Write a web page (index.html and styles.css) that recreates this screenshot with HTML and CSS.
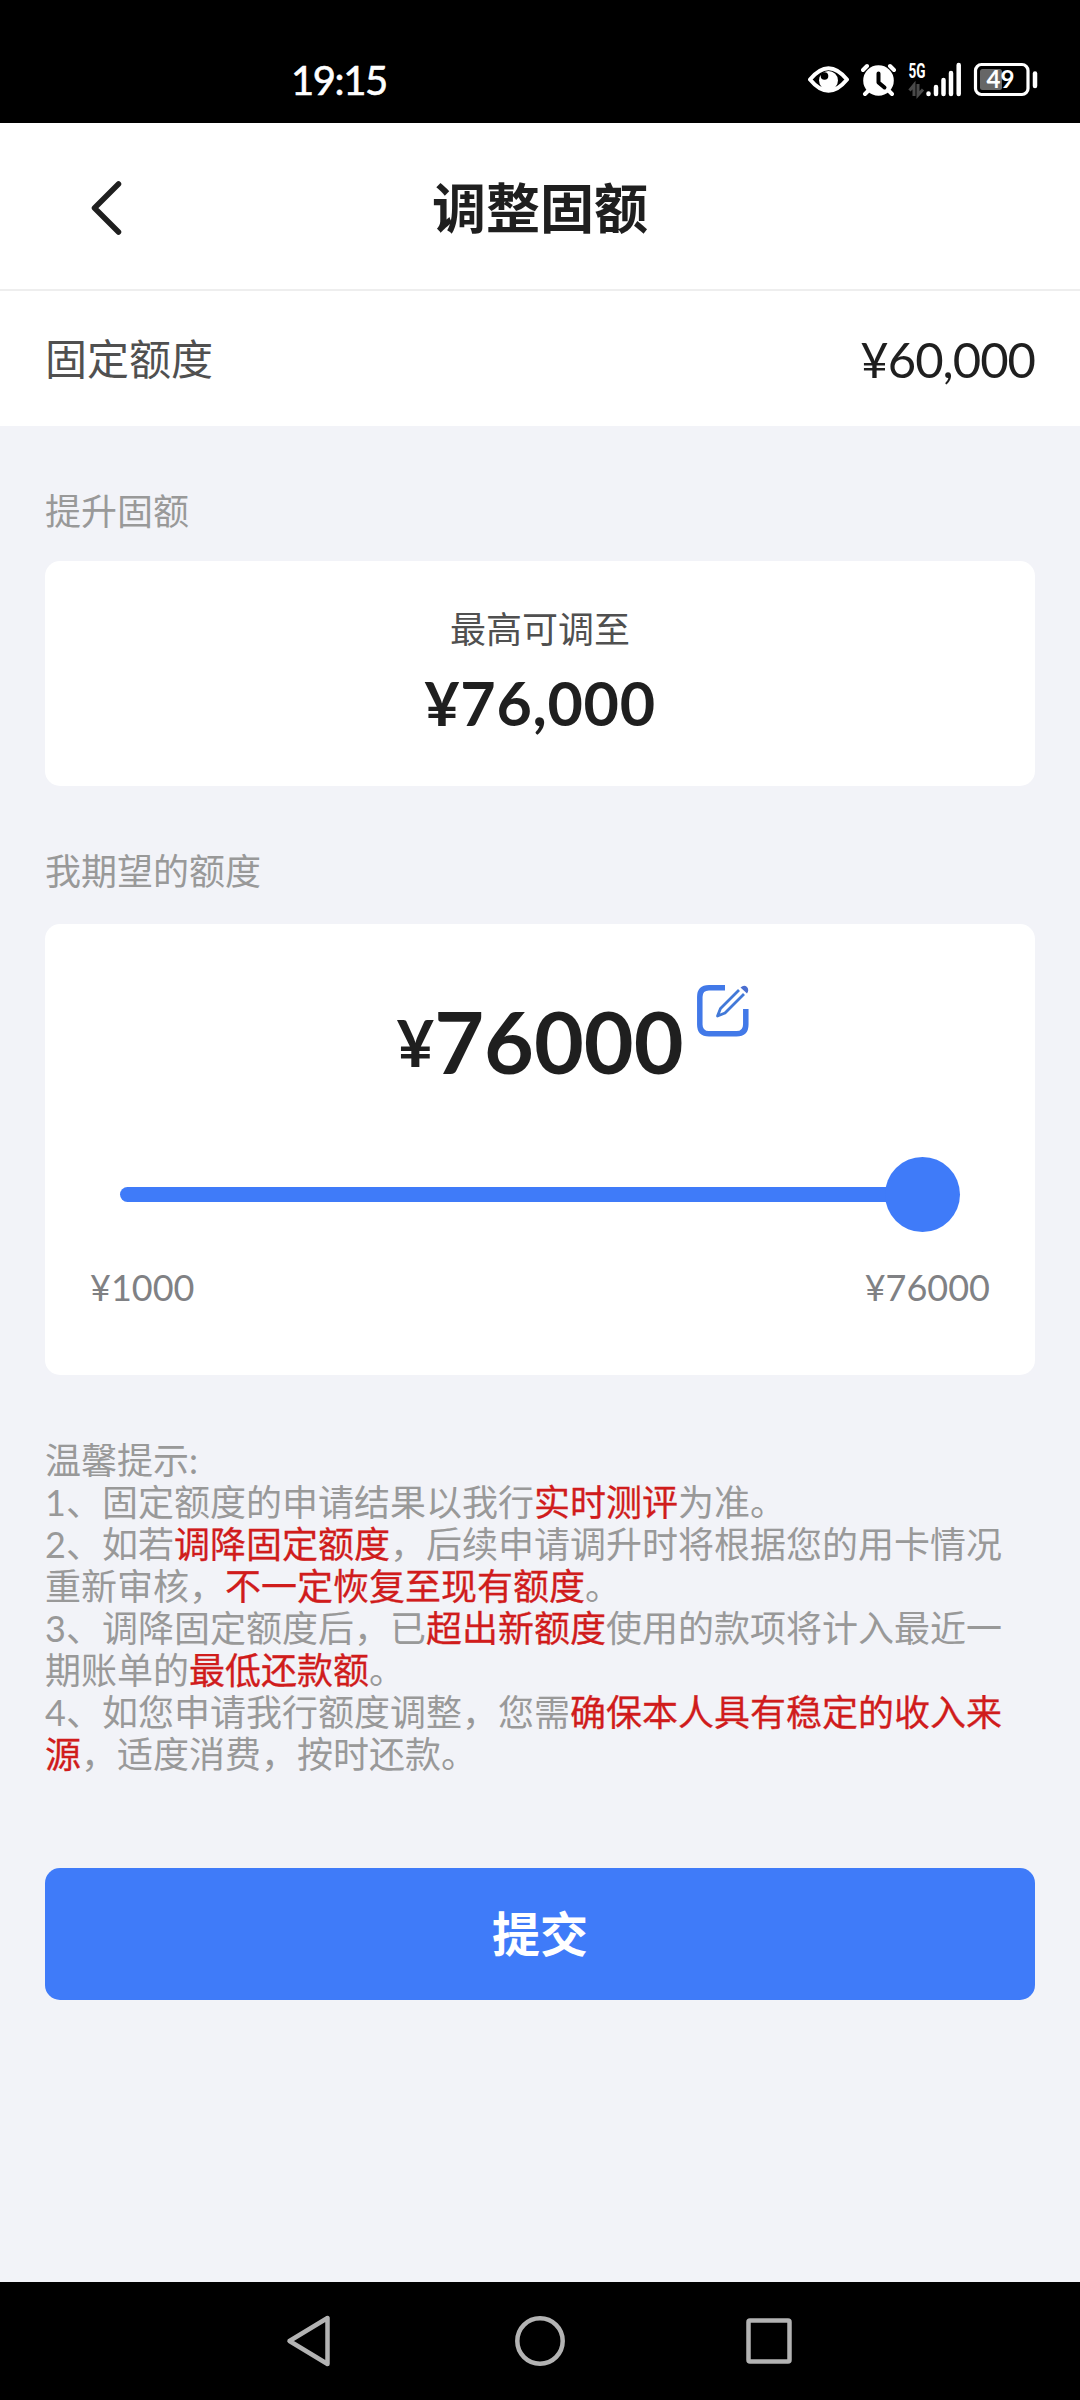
FILE: index.html
```html
<!DOCTYPE html>
<html lang="zh-CN">
<head>
<meta charset="utf-8">
<title>调整固额</title>
<link rel="stylesheet" href="styles.css">
</head>
<body>
<div class="statusbar">
  <span class="clock">19:15</span>
  <div class="status-icons">
    <svg width="42" height="36" viewBox="808 62 42 36">
      <path d="M810 79.5Q828.500 57 847 79.500Q828.500 102 810 79.500Z" fill="none" stroke="#fff" stroke-width="4" stroke-linejoin="round"/>
      <circle cx="828.500" cy="80.500" r="9.500" fill="#fff"/>
      <circle cx="824.500" cy="76" r="3.800" fill="#000"/>
    </svg>
    <svg width="36" height="36" viewBox="861 62 36 36">
      <path d="M863 70l4-4M894 70l-4-4M865 94l5-5M892 94l-5-5" stroke="#fff" stroke-width="4" stroke-linecap="round"/>
      <circle cx="878.500" cy="80.500" r="15.300" fill="#fff"/>
      <path d="M878.500 73.500v9l6 5" fill="none" stroke="#000" stroke-width="4" stroke-linecap="round" stroke-linejoin="round"/>
    </svg>
    <svg class="signal" width="54" height="36" viewBox="908 62 54 36">
      <text class="net" x="908.500" y="77.500" textLength="17" lengthAdjust="spacingAndGlyphs">5G</text>
      <path d="M909.500 90.500L914 85V96M918 84V95L923 89.500" fill="none" stroke="#4a4a4a" stroke-width="3"/>
      <path d="M928.500 94v-.500M936 94v-7M943.500 94v-14M951 94V73M958.700 94V65" stroke="#fff" stroke-width="4.500" stroke-linecap="round"/>
    </svg>
    <svg width="66" height="36" viewBox="973 62 66 36">
      <rect x="975.500" y="64.500" width="52.500" height="30" rx="6" fill="none" stroke="#fff" stroke-width="3.200"/>
      <rect x="980" y="69" width="22" height="21" rx="2.500" fill="#666"/>
      <path d="M1035 73.500v12.500" stroke="#fff" stroke-width="4.500" stroke-linecap="round"/>
      <text class="charge" x="986.500" y="87.500" textLength="28" lengthAdjust="spacingAndGlyphs">49</text>
    </svg>
  </div>
</div>

<header class="header">
  <svg class="back" width="36" height="60" viewBox="0 0 36 60"><path d="M30.500 6L6.500 30L30.500 54" fill="none" stroke="#1f1f1f" stroke-width="5.500" stroke-linecap="round" stroke-linejoin="round"/></svg>
  <h1 class="title">调整固额</h1>
</header>

<div class="limit-row">
  <span class="limit-name">固定额度</span>
  <span class="limit-value">¥60,000</span>
</div>

<main class="content">
  <h2 class="section-name">提升固额</h2>
  <section class="card max-card">
    <p class="max-name">最高可调至</p>
    <p class="max-value">¥76,000</p>
  </section>

  <h2 class="section-name section-wish">我期望的额度</h2>
  <section class="card wish-card">
    <div class="amount">
      <span class="currency">¥</span><span class="digits">76000</span>
      <svg class="edit" width="54" height="54" viewBox="0 0 54 54">
        <path d="M29 3.800H13Q3.800 3.800 3.800 13V40.500Q3.800 49.800 13 49.800H40.500Q49.800 49.800 49.800 40.500V25" fill="none" stroke="#4279e8" stroke-width="5.500"/>
        <path d="M43 6L24.500 24.500L21.500 32L29 29L48 10" fill="none" stroke="#4279d8" stroke-width="2.800" stroke-linejoin="round"/>
        <path d="M44.500 3.500Q48 .500 51 3Q53.500 6 51 9.500Z" fill="#4a6ed0"/>
      </svg>
    </div>
    <div class="slider"><div class="track"></div><div class="knob"></div></div>
    <div class="range"><span>¥1000</span><span>¥76000</span></div>
  </section>

  <div class="tips">
    <p>温馨提示:</p>
    <p>1、固定额度的申请结果以我行<em>实时测评</em>为准。</p>
    <p>2、如若<em>调降固定额度</em>，后续申请调升时将根据您的用卡情况重新审核，<em>不一定恢复至现有额度</em>。</p>
    <p>3、调降固定额度后，已<em>超出新额度</em>使用的款项将计入最近一期账单的<em>最低还款额</em>。</p>
    <p>4、如您申请我行额度调整，您需<em>确保本人具有稳定的收入来源</em>，适度消费，按时还款。</p>
  </div>

  <button class="submit">提交</button>
</main>

<nav class="navbar">
  <svg width="52" height="56" viewBox="0 0 52 56"><path d="M4.500 28L42.500 5V51Z" fill="none" stroke="#b3b3b3" stroke-width="4.500" stroke-linejoin="round"/></svg>
  <svg width="52" height="56" viewBox="0 0 52 56"><circle cx="26" cy="28" r="22.700" fill="none" stroke="#b3b3b3" stroke-width="4.500"/></svg>
  <svg width="52" height="56" viewBox="0 0 52 56"><rect x="5.500" y="7.500" width="41" height="41" rx="1.500" fill="none" stroke="#b3b3b3" stroke-width="4.500"/></svg>
</nav>
</body>
</html>
```

FILE: styles.css
```css
* {
  box-sizing: border-box;
}

body {
  margin: 0;
  width: 1080px;
  height: 2400px;
  display: flex;
  flex-direction: column;
  overflow: hidden;
  background: #f2f3f8;
  color: #1f1f1f;
  font-family: Lato, "Noto Sans CJK SC", sans-serif;
}

h1, h2, p {
  margin: 0;
  font-weight: 400;
}

.statusbar {
  height: 123px;
  padding: 62px 41px 0 291px;
  display: flex;
  justify-content: space-between;
  background: #000;
  color: #fff;
}

.clock {
  font-size: 40px;
  line-height: 37px;
  letter-spacing: -1.4px;
  -webkit-text-stroke: 0.6px #fff;
}

.status-icons {
  display: flex;
  gap: 11px;
}

.signal {
  overflow: visible;
}

.net {
  font: 700 20px "Roboto", sans-serif;
  fill: #fff;
}

.charge {
  font: 700 24px Lato, sans-serif;
  fill: #fff;
}

.header {
  height: 168px;
  padding: 3px 88px 0;
  display: grid;
  grid-template-columns: 36px 1fr 36px;
  align-items: center;
  background: #fff;
  border-bottom: 2px solid #eee;
}

.title {
  padding-top: 2px;
  font-size: 54px;
  font-weight: 700;
  line-height: 72px;
  text-align: center;
}

.limit-row {
  height: 135px;
  padding: 0 45px;
  display: flex;
  justify-content: space-between;
  align-items: center;
  background: #fff;
}

.limit-name {
  font-size: 42px;
  line-height: 60px;
  color: #505050;
}

.limit-value {
  font-size: 49px;
  line-height: 58px;
  letter-spacing: -1px;
}

.content {
  flex: 1;
  padding: 59px 45px 0;
  display: flex;
  flex-direction: column;
}

.section-name {
  margin-bottom: 24px;
  font-size: 36px;
  line-height: 52px;
  color: #999;
}

.section-wish {
  margin: 59px 0 27px;
}

.card {
  background: #fff;
  border-radius: 15px;
}

.max-card {
  height: 225px;
  padding-top: 42px;
  text-align: center;
}

.max-name {
  font-size: 36px;
  line-height: 52px;
  color: #505050;
}

.max-value {
  margin-top: 12px;
  font-size: 61px;
  font-weight: 700;
  line-height: 72px;
  letter-spacing: 0.7px;
}

.wish-card {
  height: 451px;
  padding: 65px 45px 0;
}

.amount {
  position: relative;
  width: 290px;
  height: 104px;
  margin: 0 auto;
  display: flex;
  justify-content: center;
  font-weight: 700;
}

.currency {
  font-size: 65px;
  line-height: 106px;
}

.digits {
  font-size: 86px;
  line-height: 104px;
}

.edit {
  position: absolute;
  left: 301px;
  top: -5px;
}

.slider {
  height: 75px;
  margin: 64px 30px 0;
  display: flex;
  align-items: center;
}

.track {
  flex: 1;
  height: 15px;
  margin-right: -10px;
  border-radius: 8px;
  background: #3f7bf9;
}

.knob {
  width: 75px;
  height: 75px;
  border-radius: 50%;
  background: #3f7bf9;
}

.range {
  margin-top: 33px;
  display: flex;
  justify-content: space-between;
  font-size: 36px;
  line-height: 44px;
  color: #808184;
}

.tips {
  margin-top: 64px;
  font-size: 36px;
  line-height: 42px;
  color: #999;
}

.tips em {
  font-style: normal;
  color: #d01c1c;
  -webkit-text-stroke: 0.3px #d01c1c;
}

.submit {
  height: 132px;
  margin-top: 93px;
  padding: 0;
  border: 0;
  border-radius: 15px;
  background: #3f7bf9;
  color: #fff;
  font: 700 48px/72px Lato, "Noto Sans CJK SC", sans-serif;
}

.navbar {
  height: 118px;
  padding: 0 285px;
  display: flex;
  justify-content: space-between;
  align-items: center;
  background: #000;
}
```
